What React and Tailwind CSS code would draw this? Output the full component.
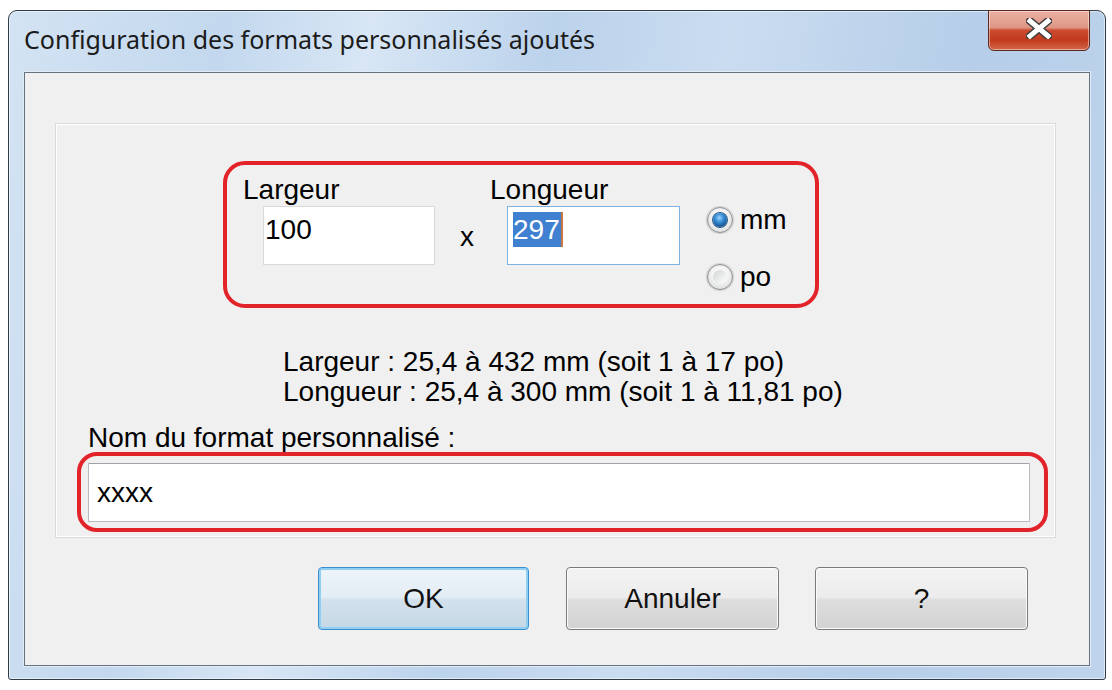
import React from "react";

function CloseButton() {
  return (
    <div className="mt-[-1px] mr-[15px] w-[102px] h-[41px] rounded-b-[6px] border border-[#5e2a20] bg-[linear-gradient(180deg,#eab0a3_0%,#df9787_42%,#cc4a2f_50%,#c23a1d_75%,#d3684a_100%)] shadow-[inset_0_0_0_1px_rgba(255,255,255,0.45)] flex items-center justify-center">
      <svg width="26" height="21" viewBox="0 0 26 21" className="mb-[4px]">
        <path d="M4 3 L22 18 M22 3 L4 18" stroke="#3f3f3f" strokeWidth="8" strokeLinecap="square" />
        <path d="M4 3 L22 18 M22 3 L4 18" stroke="#ffffff" strokeWidth="5" strokeLinecap="square" />
      </svg>
    </div>
  );
}

function Radio({ checked }) {
  return (
    <div className="w-[26px] h-[26px] rounded-full border border-[#8a8c8e] bg-[radial-gradient(circle_at_50%_40%,#ffffff_0%,#f2f2f2_45%,#cfd1d3_100%)] shadow-[0_0_1px_1px_rgba(180,180,180,0.5)] flex items-center justify-center">
      {checked ? (
        <div className="w-[14px] h-[14px] rounded-full bg-[radial-gradient(circle_at_45%_35%,#9fd4ff_0%,#3a8fd6_35%,#14508f_75%,#0f3f74_100%)] shadow-[0_0_0_1px_#2a5f90]" />
      ) : (
        <div className="w-[14px] h-[14px] rounded-full bg-[linear-gradient(135deg,#d2d4d6_0%,#eceded_60%,#ffffff_100%)]" />
      )}
    </div>
  );
}

function Button({ label, primary, width }) {
  const base =
    "h-[63px] rounded-[4px] flex items-center justify-center text-[28px] leading-[32px] text-[#111]";
  if (primary) {
    return (
      <div
        className={`${base} border border-[#3c8fcf] shadow-[inset_0_0_0_2px_#8fd0f2] bg-[linear-gradient(180deg,#eef5fa_0%,#e3edf5_48%,#d2e1ec_52%,#c6d8e6_100%)]`}
        style={{ width }}
      >
        {label}
      </div>
    );
  }
  return (
    <div
      className={`${base} border border-[#7a7a7a] shadow-[inset_0_0_0_1px_#fbfbfb] bg-[linear-gradient(180deg,#f3f3f3_0%,#ececec_48%,#dedede_52%,#d2d2d2_100%)]`}
      style={{ width }}
    >
      {label}
    </div>
  );
}

export default function App() {
  return (
    <div className="w-[1112px] h-[690px] bg-white pt-[10px] pl-[8px] font-['Liberation_Sans',Arial,sans-serif] text-black">
      {/* window frame */}
      <div className="w-[1098px] h-[670px] rounded-t-[9px] rounded-b-[3px] border border-[#2f3b47] bg-[linear-gradient(100deg,#d3e3f3_0%,#c3d8ee_18%,#d8e6f5_30%,#bcd3ec_45%,#cadcf0_60%,#b6cee9_80%,#bfd4ec_100%)] shadow-[inset_0_0_0_1px_rgba(255,255,255,0.55)] flex flex-col">
        {/* title bar */}
        <div className="h-[61px] flex justify-between items-start">
          <div className="pl-[15px] pt-[13px] font-['Noto_Sans',sans-serif] text-[25px] leading-[30px] text-[#1b1b1b]">
            Configuration des formats personnalisés ajoutés
          </div>
          <CloseButton />
        </div>

        {/* client area */}
        <div className="mx-[15px] h-[594px] border border-[#67737f] bg-[#f0f0f0] shadow-[0_0_0_1px_#e2ecf7] flex flex-col">
          {/* group panel */}
          <div className="ml-[30px] mt-[50px] w-[1001px] h-[415px] border border-[#d8dce0] shadow-[inset_0_0_0_1px_#ffffff] flex flex-col">
            {/* dimensions */}
            <div className="ml-[167px] mt-[37px] w-[596px] h-[147px] border-4 border-[#e2232a] rounded-[22px] flex items-start pl-[16px] pt-[9px]">
              <div className="flex flex-col">
                <span className="text-[28px] leading-[32px]">Largeur</span>
                <div className="ml-[20px] w-[172px] h-[59px] border border-[#d7d9de] bg-white pl-[1px] pt-[7px] text-[28px] leading-[32px]">
                  100
                </div>
              </div>
              <span className="ml-[25px] mt-[47px] text-[28px] leading-[32px]">x</span>
              <div className="ml-[16px] flex flex-col">
                <span className="text-[28px] leading-[32px]">Longueur</span>
                <div className="ml-[17px] w-[173px] h-[59px] border border-[#7fb2e2] bg-white pl-[5px] pt-[5px] flex items-start">
                  <span className="h-[35px] bg-[#3f80d0] text-white text-[28px] leading-[35px] pr-[1px]">297</span>
                  <span className="w-[2px] h-[35px] bg-[#c9773f]" />
                </div>
              </div>
              <div className="ml-[27px] mt-[30px] flex flex-col gap-[25px]">
                <div className="flex items-center h-[32px]">
                  <Radio checked />
                  <span className="ml-[7px] text-[28px] leading-[32px]">mm</span>
                </div>
                <div className="flex items-center h-[32px]">
                  <Radio />
                  <span className="ml-[7px] text-[28px] leading-[32px]">po</span>
                </div>
              </div>
            </div>

            {/* allowed ranges */}
            <div className="ml-[227px] mt-[39px] text-[28px] leading-[30px]">
              <div>Largeur : 25,4 à 432 mm (soit 1 à 17 po)</div>
              <div>Longueur : 25,4 à 300 mm (soit 1 à 11,81 po)</div>
            </div>

            {/* custom name */}
            <div className="ml-[32px] mt-[16px] text-[28px] leading-[29px]">Nom du format personnalisé :</div>
            <div className="ml-[21px] w-[971px] h-[80px] border-4 border-[#e2232a] rounded-[20px] pl-[7px] pt-[7px]">
              <div className="w-[942px] h-[59px] border border-[#b9bcc2] border-t-[#9fa3aa] bg-white pl-[8px] flex items-center text-[28px] leading-[32px]">
                xxxx
              </div>
            </div>
          </div>

          {/* buttons */}
          <div className="ml-[293px] mt-[29px] flex">
            <Button label="OK" primary width={211} />
            <div className="w-[37px]" />
            <Button label="Annuler" width={213} />
            <div className="w-[36px]" />
            <Button label="?" width={213} />
          </div>
        </div>
      </div>
    </div>
  );
}
